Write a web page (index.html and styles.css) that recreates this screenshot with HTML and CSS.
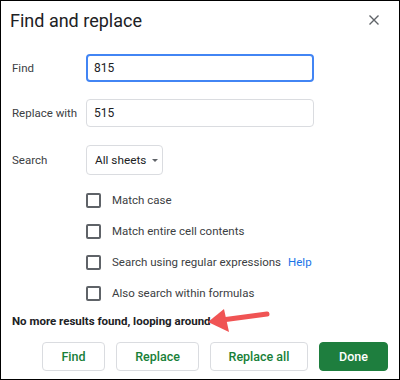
FILE: index.html
```html
<!DOCTYPE html>
<html lang="en">
<head>
    <meta charset="UTF-8">
    <title>Find and replace</title>
    <link rel="stylesheet" href="styles.css">
</head>
<body>
    <div class="dialog">
        <div class="dialog-header">
            <h1>Find and replace</h1>
            <svg class="close" width="12" height="12" viewBox="0 0 12 12">
                <path d="M1.5 1.5 L10.5 10.5 M10.5 1.5 L1.5 10.5" stroke="#5f6368" stroke-width="1.4" fill="none"/>
            </svg>
        </div>

        <div class="field-row first">
            <label>Find</label>
            <div class="text-input active">815</div>
        </div>
        <div class="field-row">
            <label>Replace with</label>
            <div class="text-input">515</div>
        </div>
        <div class="field-row search-row">
            <label>Search</label>
            <div class="dropdown">All sheets <span class="caret"></span></div>
        </div>

        <div class="options">
            <div class="option"><span class="checkbox"></span>Match case</div>
            <div class="option"><span class="checkbox"></span>Match entire cell contents</div>
            <div class="option"><span class="checkbox"></span>Search using regular expressions <a class="help">Help</a></div>
            <div class="option"><span class="checkbox"></span>Also search within formulas</div>
        </div>

        <div class="status">No more results found, looping around</div>

        <div class="actions">
            <button class="btn btn-find">Find</button>
            <button class="btn btn-replace">Replace</button>
            <button class="btn btn-all">Replace all</button>
            <button class="btn primary">Done</button>
        </div>

        <!-- red annotation arrow -->
        <svg class="annotation" width="400" height="380" viewBox="0 0 400 380">
            <line x1="267" y1="314" x2="222" y2="320" stroke="#f05454" stroke-width="5" stroke-linecap="round"/>
            <polygon points="208,322 224,309 229,332" fill="#f05454"/>
        </svg>
    </div>
</body>
</html>
```

FILE: styles.css
```css
/* Page */
body {
    margin: 0;
    background-color: #fff;
    font-family: Roboto, "Liberation Sans", sans-serif;
    color: #3c4043;
}

/* Dialog frame */
.dialog {
    position: relative;
    width: 400px;
    height: 380px;
    box-sizing: border-box;
    border: 1px solid #000;
    padding: 0 11px;
}

.dialog-header {
    display: flex;
    align-items: center;
    justify-content: space-between;
    height: 39px;
}

h1 {
    margin: 0 0 0 -2px;
    font-size: 18px;
    font-weight: 400;
    color: #202124;
}

.close {
    margin-right: 8px;
    margin-top: -1px;
}

/* Label + control rows */
.field-row {
    display: flex;
    align-items: center;
    margin-top: 17px;
    font-size: 11.5px;
}

.field-row.first {
    margin-top: 14px;
}

.field-row label {
    width: 74px;
    flex-shrink: 0;
}

.text-input {
    box-sizing: border-box;
    width: 228px;
    height: 28px;
    padding: 0 7px;
    border: 1px solid #dadce0;
    border-radius: 4px;
    display: flex;
    align-items: center;
    color: #202124;
    font-size: 12px;
}

.text-input.active {
    border: 2px solid #4285f4;
    padding: 0 6px;
}

.search-row {
    margin-top: 18px;
}

.dropdown {
    box-sizing: border-box;
    height: 30px;
    width: 77px;
    padding: 0 8px;
    border: 1px solid #dadce0;
    border-radius: 4px;
    display: flex;
    align-items: center;
    white-space: nowrap;
    font-size: 11.8px;
    color: #202124;
}

.caret {
    margin-left: 6px;
    width: 0;
    height: 0;
    border-left: 3px solid transparent;
    border-right: 3px solid transparent;
    border-top: 3.5px solid #5f6368;
}

/* Checkbox options */
.options {
    margin-top: 10px;
    margin-left: 74px;
    display: flex;
    flex-direction: column;
    gap: 1px;
}

.option {
    display: flex;
    align-items: center;
    height: 30px;
    font-size: 11.5px;
}

.checkbox {
    box-sizing: border-box;
    width: 15px;
    height: 15px;
    border: 2px solid #5f6368;
    border-radius: 2px;
    margin-right: 11px;
}

.help {
    margin-left: 7px;
    color: #1a73e8;
}

.status {
    margin-top: 5px;
    font-size: 11.5px;
    font-weight: 700;
    color: #202124;
    line-height: 16px;
}

/* Bottom buttons */
.actions {
    display: flex;
    justify-content: flex-end;
    gap: 11px;
    margin-top: 13px;
}

.btn {
    height: 29px;
    padding: 0;
    border: 1px solid #dadce0;
    border-radius: 4px;
    background-color: #fff;
    color: #188038;
    font-family: Roboto, "Liberation Sans", sans-serif;
    font-size: 12.5px;
    font-weight: 500;
    white-space: nowrap;
}

.btn-find { width: 63px; }
.btn-replace { width: 83px; }
.btn-all { width: 98px; }

.btn.primary {
    width: 69px;
    background-color: #1e7e3e;
    border-color: #1e7e3e;
    color: #fff;
}

.annotation {
    position: absolute;
    left: -1px;
    top: -1px;
    pointer-events: none;
}
```
